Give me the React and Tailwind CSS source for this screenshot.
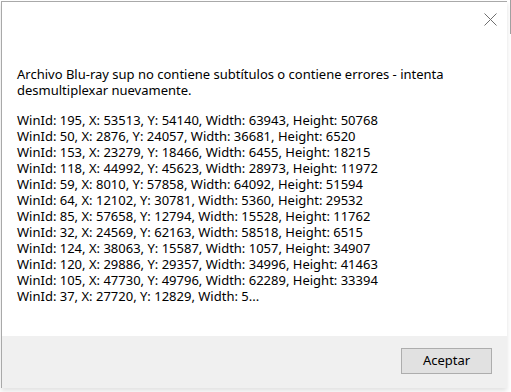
import React from 'react';

const rows = [
  'WinId: 195, X: 53513, Y: 54140, Width: 63943, Height: 50768',
  'WinId: 50, X: 2876, Y: 24057, Width: 36681, Height: 6520',
  'WinId: 153, X: 23279, Y: 18466, Width: 6455, Height: 18215',
  'WinId: 118, X: 44992, Y: 45623, Width: 28973, Height: 11972',
  'WinId: 59, X: 8010, Y: 57858, Width: 64092, Height: 51594',
  'WinId: 64, X: 12102, Y: 30781, Width: 5360, Height: 29532',
  'WinId: 85, X: 57658, Y: 12794, Width: 15528, Height: 11762',
  'WinId: 32, X: 24569, Y: 62163, Width: 58518, Height: 6515',
  'WinId: 124, X: 38063, Y: 15587, Width: 1057, Height: 34907',
  'WinId: 120, X: 29886, Y: 29357, Width: 34996, Height: 41463',
  'WinId: 105, X: 47730, Y: 49796, Width: 62289, Height: 33394',
  'WinId: 37, X: 27720, Y: 12829, Width: 5...',
];

const CloseIcon = () => (
  <svg width="13" height="13" viewBox="0 0 13 13" className="block">
    <path d="M0.5 0.5 L12.5 12.5 M12.5 0.5 L0.5 12.5" stroke="#6f6f6f" strokeWidth="1" fill="none" />
  </svg>
);

export default function App() {
  return (
    <div
      className="w-[511px] h-[392px] bg-white flex overflow-hidden text-black"
      style={{ fontFamily: '"Segoe UI", "Noto Sans", Arial, sans-serif' }}
    >
      {/* dialog */}
      <div className="mt-[1px] ml-[1px] w-[506px] h-[387px] flex flex-col border-l border-t border-[#a9a9a9] bg-white shadow-[0_3px_5px_rgba(0,0,0,0.12)]">
        <div className="h-[64px] flex justify-end items-start pt-[11px] pr-[10px]">
          <CloseIcon />
        </div>

        <div className="flex-1 pl-[15px] pr-[20px] text-[13px] leading-[16px]">
          <p>
            Archivo Blu-ray sup no contiene subtítulos o contiene errores - intenta desmultiplexar nuevamente.
          </p>
          <div className="mt-[14px]">
            {rows.map((r, i) => (
              <div key={i} className="whitespace-nowrap">{r}</div>
            ))}
          </div>
        </div>

        <div className="h-[52px] bg-[#f0f0f0] flex items-start justify-end pt-[12px] pr-[15px]">
          <button className="w-[91px] h-[26px] border border-[#adadad] bg-[#e1e1e1] text-[13px] text-black">
            Aceptar
          </button>
        </div>
      </div>

      {/* edge of the window behind */}
      <div className="ml-[3px] w-[1px] h-[34px] bg-[#a0a0a0]" />
    </div>
  );
}
